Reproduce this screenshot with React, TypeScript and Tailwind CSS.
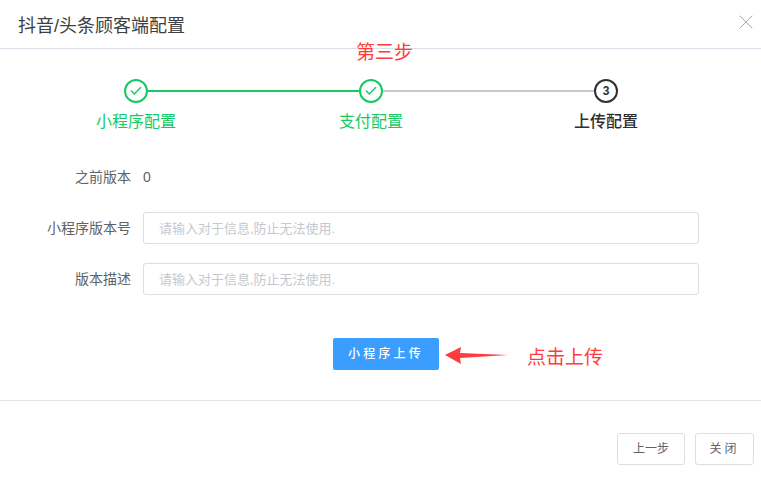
import { Check, X } from 'lucide-react';

const FONT = "font-['Liberation_Sans','Noto_Sans_CJK_SC',sans-serif]";

const STEPS = [
  { label: '小程序配置', done: true },
  { label: '支付配置', done: true },
  { label: '上传配置', done: false },
];

function Step({ index, label, done }: { index: number; label: string; done: boolean }) {
  return (
    <div className="relative flex w-[235px] flex-col items-center">
      {index === 0 && <div className="absolute left-1/2 top-[11px] h-[2px] w-[235px] bg-[#17c964]" />}
      {index === 1 && <div className="absolute left-1/2 top-[11px] h-[2px] w-[235px] bg-[#c5c8ce]" />}
      <div
        className={`relative z-10 flex h-6 w-6 items-center justify-center rounded-full border-2 bg-white ${
          done ? 'border-[#17c964] text-[#17c964]' : 'border-[#2d2f33] text-[#2d2f33]'
        }`}
      >
        {done ? <Check className="h-[14px] w-[14px]" strokeWidth={2.4} /> : <span className="text-xs font-bold leading-none">3</span>}
      </div>
      <div className={`mt-[7px] text-base leading-[24px] ${done ? 'text-[#17c964]' : 'font-medium text-[#2d2f33]'}`}>{label}</div>
    </div>
  );
}

function Field({ label }: { label: string }) {
  return (
    <div className="flex items-center">
      <label className="w-[131px] shrink-0 text-right text-sm text-[#606266]">{label}</label>
      <input
        readOnly
        placeholder="请输入对于信息,防止无法使用."
        className="ml-3 h-8 w-[556px] rounded-[3px] border border-[#dcdee2] bg-white px-[15px] text-[13px] outline-none placeholder:text-[#c5c8ce]"
      />
    </div>
  );
}

export default function App() {
  return (
    <div className={`relative h-[480px] w-[761px] overflow-hidden bg-white ${FONT}`}>
      <header className="flex h-[49px] items-center justify-between border-b border-[#dcdee9] pl-[18px] pr-[3px]">
        <h1 className="mt-[4px] text-lg font-normal leading-none text-[#3d3f44]">抖音/头条顾客端配置</h1>
        <X className="mb-[4px] h-6 w-6 text-[#a8a8a8]" strokeWidth={1} />
      </header>

      <span className="absolute left-[356px] top-[41px] text-[19px] leading-[24px] text-[#ff3b3b]">第三步</span>

      <div className="ml-[18.5px] mt-[30px] flex">
        {STEPS.map((s, i) => (
          <Step key={s.label} index={i} label={s.label} done={s.done} />
        ))}
      </div>

      <div className="mt-[27px] flex flex-col">
        <div className="flex h-8 items-center">
          <span className="w-[131px] shrink-0 text-right text-sm text-[#606266]">之前版本</span>
          <span className="ml-3 text-sm text-[#606266]">0</span>
        </div>
        <div className="mt-[19px] flex flex-col gap-[19px]">
          <Field label="小程序版本号" />
          <Field label="版本描述" />
        </div>
      </div>

      <div className="ml-[333px] mt-[43px] flex items-center">
        <button type="button" className="h-8 w-[106px] rounded-[2px] bg-[#3b9eff] text-xs font-medium tracking-[3.2px] text-white">
          小程序上传
        </button>
        <svg className="ml-[5px] mt-[2px]" width="66" height="20" viewBox="0 0 66 20">
          <path d="M1 10 L17 2 L16 8 L64 10 L16 13 L17 19 Z" fill="#ff3b3f" />
        </svg>
        <span className="ml-[17px] mt-[8px] text-[19px] leading-[24px] text-[#ff3b3b]">点击上传</span>
      </div>

      <div className="mt-[30px] border-t border-[#e4e4ec]" />

      <div className="mr-[7px] mt-[32px] flex justify-end gap-[10px]">
        <button type="button" className="h-8 w-[68px] rounded-[3px] border border-[#dcdee2] bg-white text-xs text-[#606266]">
          上一步
        </button>
        <button type="button" className="h-8 w-[59px] rounded-[3px] border border-[#dcdee2] bg-white text-xs tracking-[3px] text-[#606266]">
          关闭
        </button>
      </div>
    </div>
  );
}
